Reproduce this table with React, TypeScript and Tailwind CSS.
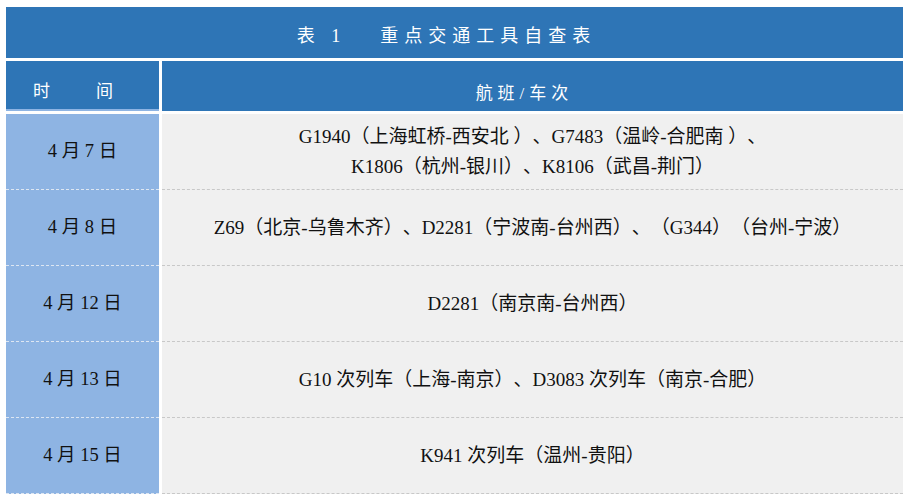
const rows = [
  { date: "4 月 7 日", lines: ["G1940（上海虹桥-西安北 ）、G7483（温岭-合肥南 ）、", "K1806（杭州-银川）、K8106（武昌-荆门）"] },
  { date: "4 月 8 日", lines: ["Z69（北京-乌鲁木齐）、D2281（宁波南-台州西）、（G344）（台州-宁波）"] },
  { date: "4 月 12 日", lines: ["D2281（南京南-台州西）"] },
  { date: "4 月 13 日", lines: ["G10 次列车（上海-南京）、D3083 次列车（南京-合肥）"] },
  { date: "4 月 15 日", lines: ["K941 次列车（温州-贵阳）"] },
];

export default function App() {
  return (
    <div className="h-[499px] w-[909px] bg-white px-[6px] pt-[7px] font-[Liberation_Serif,Noto_Sans_CJK_SC,serif] [text-spacing-trim:space-all]">
      <div className="flex h-[51px] items-center justify-center bg-[#2e75b6] pt-[8px] pr-[16px] text-[18px] tracking-[6px] text-white">
        <span>表 1</span>
        <span className="ml-[34px]">重点交通工具自查表</span>
      </div>

      <div className="mt-[3px] flex h-[50px] gap-[3px]">
        <div className="flex w-[153px] items-end gap-[46px] border-b-2 border-[#8eb4e3] bg-[#2e75b6] pb-[5px] pl-[27px] text-[17px] text-white">
          <span>时</span>
          <span>间</span>
        </div>
        <div className="flex flex-1 items-end justify-center bg-[#2e75b6] pb-[5px] pr-[16px] text-[17px] tracking-[5px] text-white">
          航班/车次
        </div>
      </div>

      <div className="mt-[3px] flex flex-col">
        {rows.map((row) => (
          <div key={row.date} className="flex h-[76px] gap-[3px]">
            <div className="flex w-[153px] items-center justify-center border-b border-dashed border-[#dde6f2] bg-[#8eb4e3] text-[18.5px] text-[#111]">
              {row.date}
            </div>
            <div className="flex flex-1 flex-col items-center justify-center border-b border-dashed border-[#c8c8c8] bg-[#f0f0f0] text-[19px] leading-[30px] text-[#111]">
              {row.lines.map((line) => (
                <p key={line}>{line}</p>
              ))}
            </div>
          </div>
        ))}
      </div>
    </div>
  );
}
